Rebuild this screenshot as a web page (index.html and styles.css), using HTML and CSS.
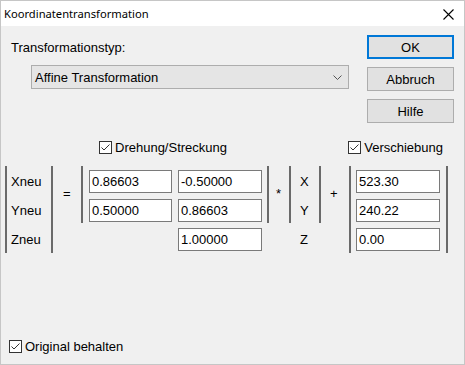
FILE: index.html
```html
<!DOCTYPE html>
<html lang="de">
<head>
<meta charset="utf-8">
<title>Koordinatentransformation</title>
<link rel="stylesheet" href="styles.css">
</head>
<body>
<div class="win">
  <div class="titlebar">
    <span class="title">Koordinatentransformation</span>
    <svg class="close" width="11" height="11" viewBox="0 0 11 11"><path d="M0.5 0.5 L10.5 10.5 M10.5 0.5 L0.5 10.5" stroke="#000" stroke-width="1.1" fill="none"/></svg>
  </div>
  <div class="top">
    <div class="top-left">
      <div class="label">Transformationstyp:</div>
      <div class="combo">
        <span>Affine Transformation</span>
        <svg class="chev" width="9" height="5" viewBox="0 0 9 5"><path d="M0.5 0.5 L4.5 4.5 L8.5 0.5" stroke="#555" stroke-width="1" fill="none"/></svg>
      </div>
    </div>
    <div class="buttons">
      <div class="btn btn-default">OK</div>
      <div class="btn">Abbruch</div>
      <div class="btn">Hilfe</div>
    </div>
  </div>
  <div class="checks">
    <label class="check"><svg class="cb" width="13" height="13" viewBox="0 0 13 13"><rect x="0.5" y="0.5" width="12" height="12" fill="#fff" stroke="#333"/><path d="M2.5 6.5 L5 9 L10.5 3.5" stroke="#333" stroke-width="1" fill="none"/></svg>Drehung/Streckung</label>
    <label class="check check-right"><svg class="cb" width="13" height="13" viewBox="0 0 13 13"><rect x="0.5" y="0.5" width="12" height="12" fill="#fff" stroke="#333"/><path d="M2.5 6.5 L5 9 L10.5 3.5" stroke="#333" stroke-width="1" fill="none"/></svg>Verschiebung</label>
  </div>
  <div class="equation">
    <div class="bracket vec-out">
      <div class="cell lbl">Xneu</div>
      <div class="cell lbl">Yneu</div>
      <div class="cell lbl">Zneu</div>
    </div>
    <div class="op op-eq">=</div>
    <div class="group">
      <div class="bracket mat">
        <div class="row">
          <div class="field">0.86603</div>
          <div class="field">-0.50000</div>
        </div>
        <div class="row">
          <div class="field">0.50000</div>
          <div class="field">0.86603</div>
        </div>
      </div>
      <div class="row row-extra mat-extra">
        <div class="field">1.00000</div>
      </div>
    </div>
    <div class="op op-mul">*</div>
    <div class="group">
      <div class="bracket vec-in">
        <div class="cell xyz">X</div>
        <div class="cell xyz">Y</div>
      </div>
      <div class="cell xyz xyz-extra">Z</div>
    </div>
    <div class="op op-plus">+</div>
    <div class="bracket vec-t">
      <div class="field">523.30</div>
      <div class="field">240.22</div>
      <div class="field">0.00</div>
    </div>
  </div>
  <div class="bottom">
    <label class="check"><svg class="cb" width="13" height="13" viewBox="0 0 13 13"><rect x="0.5" y="0.5" width="12" height="12" fill="#fff" stroke="#333"/><path d="M2.5 6.5 L5 9 L10.5 3.5" stroke="#333" stroke-width="1" fill="none"/></svg>Original behalten</label>
  </div>
</div>
</body>
</html>
```
FILE: styles.css
```css
html, body {
  margin: 0;
  padding: 0;
  background: #ffffff;
}

.win {
  width: 465px;
  height: 365px;
  box-sizing: border-box;
  border: 1px solid #c6c6c6;
  background: #f0f0f0;
  display: flex;
  flex-direction: column;
  font-family: "Liberation Sans", Arial, sans-serif;
  font-size: 13px;
  line-height: 15px;
  color: #000;
}

.titlebar {
  height: 25px;
  flex: none;
  background: #fff;
  display: flex;
  align-items: center;
  padding: 0 10px 0 3px;
  font-family: "Noto Sans", "Open Sans", sans-serif;
  font-size: 11.2px;
}

.close {
  margin-left: auto;
  margin-top: 1px;
}

.top {
  display: flex;
  padding-top: 9px;
}

.top-left {
  flex: 1;
  padding: 5px 0 0 10px;
}

.combo {
  margin: 10px 0 0 20px;
  width: 318px;
  height: 24px;
  box-sizing: border-box;
  border: 1px solid #adadad;
  background: #e5e5e5;
  display: flex;
  align-items: center;
  padding: 0 4px 0 3px;
}

.chev {
  margin-left: auto;
  margin-right: 2px;
}

.buttons {
  width: 87px;
  margin-right: 10px;
  display: flex;
  flex-direction: column;
  gap: 8px;
}

.btn {
  height: 24px;
  box-sizing: border-box;
  border: 1px solid #adadad;
  background: #e1e1e1;
  display: flex;
  align-items: center;
  justify-content: center;
}

.btn-default {
  border: 2px solid #0078d7;
}

.checks {
  display: flex;
  margin-top: 17px;
  padding: 0 21px 0 98px;
}

.check {
  display: flex;
  align-items: center;
  gap: 3px;
}

.check-right {
  margin-left: auto;
}

.cb {
  flex: none;
}

.equation {
  display: flex;
  align-items: flex-start;
  margin: 11px 0 0 4px;
}

.bracket {
  border-left: 2px solid #6a6a6a;
  border-right: 2px solid #6a6a6a;
  box-sizing: border-box;
  padding-top: 4px;
  display: flex;
  flex-direction: column;
  gap: 6px;
}

.vec-out {
  width: 48px;
  height: 87px;
  padding-left: 4px;
}

.cell {
  height: 23px;
  line-height: 23px;
}

.op {
  height: 57px;
  padding-bottom: 3px;
  box-sizing: border-box;
  display: flex;
  align-items: center;
}

.op-eq {
  width: 28px;
  padding-left: 10px;
}

.op-mul {
  width: 20px;
  padding-left: 7px;
}

.op-plus {
  width: 28px;
  padding-left: 9px;
}

.group {
  display: flex;
  flex-direction: column;
}

.mat {
  width: 188px;
  height: 57px;
  padding-left: 6px;
}

.row {
  display: flex;
  gap: 6px;
}

.mat-extra {
  margin: 5px 0 0 97px;
}

.field {
  height: 23px;
  width: 84px;
  box-sizing: border-box;
  border: 1px solid #7a7a7a;
  background: #fff;
  padding: 0 2px;
  line-height: 21px;
}

.row .field:first-child {
  width: 83px;
}

.mat-extra .field:first-child {
  width: 84px;
}

.vec-in {
  width: 32px;
  height: 57px;
  padding-left: 9px;
}

.xyz-extra {
  margin-top: 5px;
  padding-left: 11px;
}

.vec-t {
  width: 99px;
  height: 87px;
  padding-left: 5px;
}

.bottom {
  margin-top: auto;
  padding: 0 0 10px 8px;
}
```
